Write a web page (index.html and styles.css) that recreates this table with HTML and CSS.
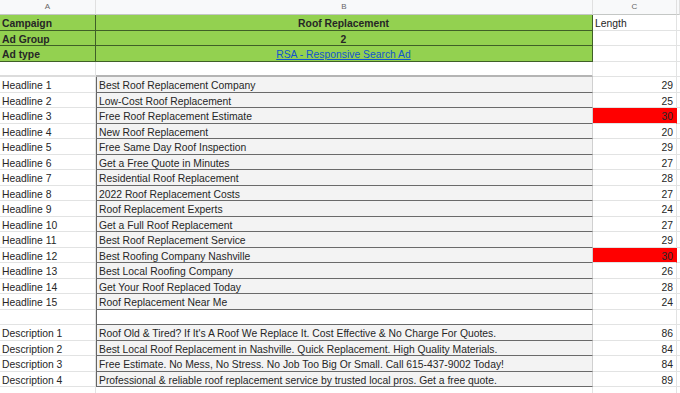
FILE: index.html
```html
<!DOCTYPE html>
<html>
<head>
<meta charset="utf-8">
<link rel="stylesheet" href="styles.css">
</head>
<body>
<div class="sheet">
  <div class="row head">
    <div class="c h">A</div><div class="c h">B</div><div class="c h">C</div><div class="c h"></div>
  </div>
  <div class="row">
    <div class="c g gl bold">Campaign</div><div class="c g gb bold center">Roof Replacement</div><div class="c">Length</div><div class="c"></div>
  </div>
  <div class="row">
    <div class="c g gl bold">Ad Group</div><div class="c g gb bold center">2</div><div class="c"></div><div class="c"></div>
  </div>
  <div class="row">
    <div class="c g gl bold">Ad type</div><div class="c g gb center"><a class="link" href="#">RSA - Responsive Search Ad</a></div><div class="c"></div><div class="c"></div>
  </div>
  <div class="row">
    <div class="c sepa"></div><div class="c sepb"></div><div class="c"></div><div class="c"></div>
  </div>
  <div class="row"><div class="c">Headline 1</div><div class="c bx">Best Roof Replacement Company</div><div class="c num">29</div><div class="c"></div></div>
  <div class="row"><div class="c">Headline 2</div><div class="c bx">Low-Cost Roof Replacement</div><div class="c num">25</div><div class="c"></div></div>
  <div class="row"><div class="c">Headline 3</div><div class="c bx">Free Roof Replacement Estimate</div><div class="c num red">30</div><div class="c"></div></div>
  <div class="row"><div class="c">Headline 4</div><div class="c bx">New Roof Replacement</div><div class="c num">20</div><div class="c"></div></div>
  <div class="row"><div class="c">Headline 5</div><div class="c bx">Free Same Day Roof Inspection</div><div class="c num">29</div><div class="c"></div></div>
  <div class="row"><div class="c">Headline 6</div><div class="c bx">Get a Free Quote in Minutes</div><div class="c num">27</div><div class="c"></div></div>
  <div class="row"><div class="c">Headline 7</div><div class="c bx">Residential Roof Replacement</div><div class="c num">28</div><div class="c"></div></div>
  <div class="row"><div class="c">Headline 8</div><div class="c bx">2022 Roof Replacement Costs</div><div class="c num">27</div><div class="c"></div></div>
  <div class="row"><div class="c">Headline 9</div><div class="c bx">Roof Replacement Experts</div><div class="c num">24</div><div class="c"></div></div>
  <div class="row"><div class="c">Headline 10</div><div class="c bx">Get a Full Roof Replacement</div><div class="c num">27</div><div class="c"></div></div>
  <div class="row"><div class="c">Headline 11</div><div class="c bx">Best Roof Replacement Service</div><div class="c num">29</div><div class="c"></div></div>
  <div class="row"><div class="c">Headline 12</div><div class="c bx">Best Roofing Company Nashville</div><div class="c num red">30</div><div class="c"></div></div>
  <div class="row"><div class="c">Headline 13</div><div class="c bx">Best Local Roofing Company</div><div class="c num">26</div><div class="c"></div></div>
  <div class="row"><div class="c">Headline 14</div><div class="c bx">Get Your Roof Replaced Today</div><div class="c num">28</div><div class="c"></div></div>
  <div class="row"><div class="c">Headline 15</div><div class="c bx">Roof Replacement Near Me</div><div class="c num">24</div><div class="c"></div></div>
  <div class="row"><div class="c"></div><div class="c bx blank"></div><div class="c"></div><div class="c"></div></div>
  <div class="row"><div class="c">Description 1</div><div class="c bx">Roof Old &amp; Tired? If It's A Roof We Replace It. Cost Effective &amp; No Charge For Quotes.</div><div class="c num">86</div><div class="c"></div></div>
  <div class="row"><div class="c">Description 2</div><div class="c bx">Best Local Roof Replacement in Nashville. Quick Replacement. High Quality Materials.</div><div class="c num">84</div><div class="c"></div></div>
  <div class="row"><div class="c">Description 3</div><div class="c bx">Free Estimate. No Mess, No Stress. No Job Too Big Or Small. Call 615-437-9002 Today!</div><div class="c num">84</div><div class="c"></div></div>
  <div class="row"><div class="c">Description 4</div><div class="c bx">Professional &amp; reliable roof replacement service by trusted local pros. Get a free quote.</div><div class="c num">89</div><div class="c"></div></div>
  <div class="row"><div class="c"></div><div class="c"></div><div class="c"></div><div class="c"></div></div>
</div>
</body>
</html>
```

FILE: styles.css
```css
html, body {
  margin: 0;
  padding: 0;
  background: #ffffff;
  overflow: hidden;
}

.sheet {
  width: 680px;
  font-family: "Liberation Sans", Arial, sans-serif;
  font-size: 10.35px;
  color: #262626;
}

.row {
  display: grid;
  grid-template-columns: 96px 497px 84px 3px;
  height: 15.5px;
}

.c {
  box-sizing: border-box;
  border-right: 1px solid #e2e3e3;
  border-bottom: 1px solid #e2e3e3;
  padding: 0 3px 0 2px;
  display: flex;
  align-items: flex-end;
  white-space: nowrap;
  overflow: hidden;
  line-height: 11.5px;
}

.head {
  height: 15px;
  background: #f8f9fa;
}

.head .c {
  justify-content: center;
  align-items: center;
  padding: 0;
  font-size: 8px;
  color: #666666;
  border-right-color: #e0e0e0;
  border-bottom: 1px solid #c4c7c5;
}

.g {
  background: #93d150;
  border-bottom: 1px solid #3f5f27;
}

.gl {
  border-right: 1px solid #3f5f27;
}

.gb {
  border-right: 1px solid #3f5f27;
}

.bold {
  font-weight: bold;
}

.center {
  justify-content: center;
}

.link {
  color: #1155cc;
  text-decoration: underline;
}

.sepa {
  border-bottom: 2px solid #dcdcdc;
}

.sepb {
  border-bottom: 2px solid #b4b4b4;
}

.bx {
  background: #f3f3f3;
  border-left: 1px solid #666666;
  border-bottom: 1px solid #6a6a6a;
  border-right-color: #d0d0d0;
  padding-left: 2px;
}

.bx.blank {
  background: #ffffff;
}

.num {
  justify-content: flex-end;
}

.red {
  background: #ff0000;
  border-right-color: #ff0000;
}
```
